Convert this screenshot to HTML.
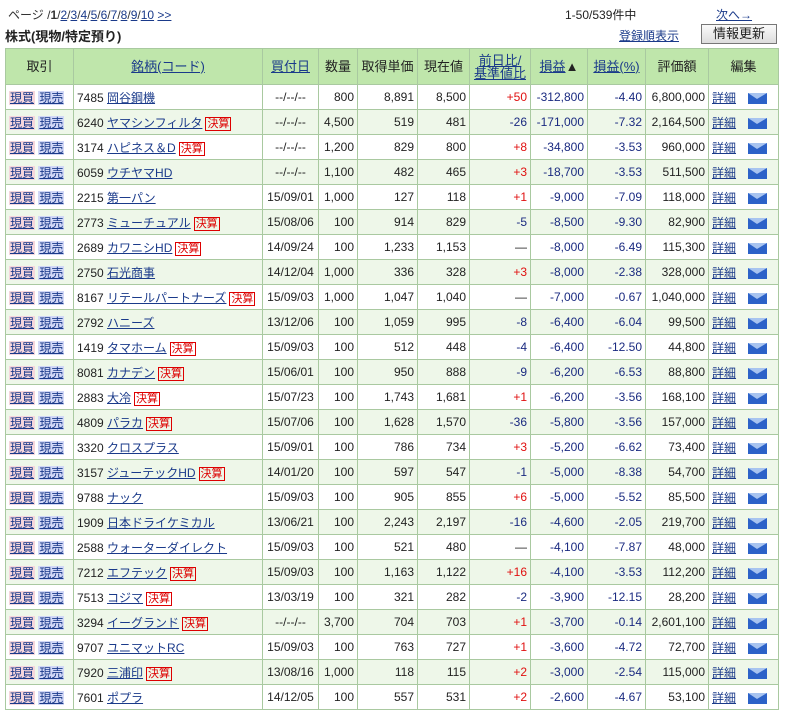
<!DOCTYPE html>
<html><head><meta charset="utf-8"><style>
body{margin:0;background:#fff;font-family:"Liberation Sans","Noto Sans CJK JP",sans-serif;font-size:12px;color:#222;width:786px;height:711px;overflow:hidden;position:relative}
a{color:#1a3a8a;text-decoration:underline}
.top{position:absolute;top:6px;left:8px;font-size:12px;color:#333}
.cnt{position:absolute;top:6px;left:565px}
.nx{position:absolute;top:6px;left:716px}
.ttl{position:absolute;top:26px;left:5px;font-weight:bold;font-size:13px}
.reg{position:absolute;top:27px;left:619px}
.btn{position:absolute;top:24px;left:701px;width:74px;height:18px;border:1px solid #777;background:linear-gradient(#fafafa,#ddd);text-align:center;line-height:18px;font-size:13px}
table{position:absolute;top:48px;left:5px;border-collapse:collapse;table-layout:fixed;width:773px}
td,th{border:1px solid #a9c9a0;height:24px;padding:0 3px;white-space:nowrap;overflow:hidden}
th{background:#bfe6ab;font-weight:normal;height:35px;font-size:13px;text-align:center;line-height:13px}
tr:nth-child(odd) td{background:#eef7e9}
td{text-align:right}
td.l{text-align:left}
td.c{text-align:center}
.b{background:#f6d6dc;padding:0 1px}.s{background:#d2d8f6;padding:0 1px}
.k{color:#d00;border:1px solid #d00;font-size:11px;padding:0 1px;margin-left:3px;text-decoration:none}
.p{color:#e01010}.n{color:#1a2a80}
.m{display:inline-block;width:19px;height:11px;vertical-align:middle;margin-left:12px;background:#2c62c8;position:relative}
.m:after{content:"";position:absolute;left:0;top:0;border-left:9px solid transparent;border-right:10px solid transparent;border-top:6px solid #a8c4f0}
</style></head><body>
<div class="top">ページ /<b>1</b>/<a>2</a>/<a>3</a>/<a>4</a>/<a>5</a>/<a>6</a>/<a>7</a>/<a>8</a>/<a>9</a>/<a>10</a> <a>&gt;&gt;</a></div>
<div class="cnt">1-50/539件中</div><div class="nx"><a>次へ→</a></div>
<div class="ttl">株式(現物/特定預り)</div>
<div class="reg"><a>登録順表示</a></div>
<div class="btn">情報更新</div>
<table>
<colgroup><col style="width:68px"><col style="width:189px"><col style="width:56px"><col style="width:39px"><col style="width:60px"><col style="width:52px"><col style="width:61px"><col style="width:57px"><col style="width:58px"><col style="width:63px"><col style="width:70px"></colgroup>
<tr><th>取引</th><th><a>銘柄(コード)</a></th><th><a>買付日</a></th><th>数量</th><th>取得単価</th><th>現在値</th><th><a>前日比/<br>基準値比</a></th><th><a>損益</a>▲</th><th><a>損益(%)</a></th><th>評価額</th><th>編集</th></tr>
<tr><td class="l"><a class="b">現買</a> <a class="s">現売</a></td><td class="l">7485 <a>岡谷鋼機</a></td><td class="c">--/--/--</td><td>800</td><td>8,891</td><td>8,500</td><td class="p">+50</td><td class="n">-312,800</td><td class="n">-4.40</td><td>6,800,000</td><td class="l"><a>詳細</a><span class="m"></span></td></tr>
<tr><td class="l"><a class="b">現買</a> <a class="s">現売</a></td><td class="l">6240 <a>ヤマシンフィルタ</a><span class="k">決算</span></td><td class="c">--/--/--</td><td>4,500</td><td>519</td><td>481</td><td class="n">-26</td><td class="n">-171,000</td><td class="n">-7.32</td><td>2,164,500</td><td class="l"><a>詳細</a><span class="m"></span></td></tr>
<tr><td class="l"><a class="b">現買</a> <a class="s">現売</a></td><td class="l">3174 <a>ハピネス＆D</a><span class="k">決算</span></td><td class="c">--/--/--</td><td>1,200</td><td>829</td><td>800</td><td class="p">+8</td><td class="n">-34,800</td><td class="n">-3.53</td><td>960,000</td><td class="l"><a>詳細</a><span class="m"></span></td></tr>
<tr><td class="l"><a class="b">現買</a> <a class="s">現売</a></td><td class="l">6059 <a>ウチヤマHD</a></td><td class="c">--/--/--</td><td>1,100</td><td>482</td><td>465</td><td class="p">+3</td><td class="n">-18,700</td><td class="n">-3.53</td><td>511,500</td><td class="l"><a>詳細</a><span class="m"></span></td></tr>
<tr><td class="l"><a class="b">現買</a> <a class="s">現売</a></td><td class="l">2215 <a>第一パン</a></td><td class="c">15/09/01</td><td>1,000</td><td>127</td><td>118</td><td class="p">+1</td><td class="n">-9,000</td><td class="n">-7.09</td><td>118,000</td><td class="l"><a>詳細</a><span class="m"></span></td></tr>
<tr><td class="l"><a class="b">現買</a> <a class="s">現売</a></td><td class="l">2773 <a>ミューチュアル</a><span class="k">決算</span></td><td class="c">15/08/06</td><td>100</td><td>914</td><td>829</td><td class="n">-5</td><td class="n">-8,500</td><td class="n">-9.30</td><td>82,900</td><td class="l"><a>詳細</a><span class="m"></span></td></tr>
<tr><td class="l"><a class="b">現買</a> <a class="s">現売</a></td><td class="l">2689 <a>カワニシHD</a><span class="k">決算</span></td><td class="c">14/09/24</td><td>100</td><td>1,233</td><td>1,153</td><td>—</td><td class="n">-8,000</td><td class="n">-6.49</td><td>115,300</td><td class="l"><a>詳細</a><span class="m"></span></td></tr>
<tr><td class="l"><a class="b">現買</a> <a class="s">現売</a></td><td class="l">2750 <a>石光商事</a></td><td class="c">14/12/04</td><td>1,000</td><td>336</td><td>328</td><td class="p">+3</td><td class="n">-8,000</td><td class="n">-2.38</td><td>328,000</td><td class="l"><a>詳細</a><span class="m"></span></td></tr>
<tr><td class="l"><a class="b">現買</a> <a class="s">現売</a></td><td class="l">8167 <a>リテールパートナーズ</a><span class="k">決算</span></td><td class="c">15/09/03</td><td>1,000</td><td>1,047</td><td>1,040</td><td>—</td><td class="n">-7,000</td><td class="n">-0.67</td><td>1,040,000</td><td class="l"><a>詳細</a><span class="m"></span></td></tr>
<tr><td class="l"><a class="b">現買</a> <a class="s">現売</a></td><td class="l">2792 <a>ハニーズ</a></td><td class="c">13/12/06</td><td>100</td><td>1,059</td><td>995</td><td class="n">-8</td><td class="n">-6,400</td><td class="n">-6.04</td><td>99,500</td><td class="l"><a>詳細</a><span class="m"></span></td></tr>
<tr><td class="l"><a class="b">現買</a> <a class="s">現売</a></td><td class="l">1419 <a>タマホーム</a><span class="k">決算</span></td><td class="c">15/09/03</td><td>100</td><td>512</td><td>448</td><td class="n">-4</td><td class="n">-6,400</td><td class="n">-12.50</td><td>44,800</td><td class="l"><a>詳細</a><span class="m"></span></td></tr>
<tr><td class="l"><a class="b">現買</a> <a class="s">現売</a></td><td class="l">8081 <a>カナデン</a><span class="k">決算</span></td><td class="c">15/06/01</td><td>100</td><td>950</td><td>888</td><td class="n">-9</td><td class="n">-6,200</td><td class="n">-6.53</td><td>88,800</td><td class="l"><a>詳細</a><span class="m"></span></td></tr>
<tr><td class="l"><a class="b">現買</a> <a class="s">現売</a></td><td class="l">2883 <a>大冷</a><span class="k">決算</span></td><td class="c">15/07/23</td><td>100</td><td>1,743</td><td>1,681</td><td class="p">+1</td><td class="n">-6,200</td><td class="n">-3.56</td><td>168,100</td><td class="l"><a>詳細</a><span class="m"></span></td></tr>
<tr><td class="l"><a class="b">現買</a> <a class="s">現売</a></td><td class="l">4809 <a>パラカ</a><span class="k">決算</span></td><td class="c">15/07/06</td><td>100</td><td>1,628</td><td>1,570</td><td class="n">-36</td><td class="n">-5,800</td><td class="n">-3.56</td><td>157,000</td><td class="l"><a>詳細</a><span class="m"></span></td></tr>
<tr><td class="l"><a class="b">現買</a> <a class="s">現売</a></td><td class="l">3320 <a>クロスプラス</a></td><td class="c">15/09/01</td><td>100</td><td>786</td><td>734</td><td class="p">+3</td><td class="n">-5,200</td><td class="n">-6.62</td><td>73,400</td><td class="l"><a>詳細</a><span class="m"></span></td></tr>
<tr><td class="l"><a class="b">現買</a> <a class="s">現売</a></td><td class="l">3157 <a>ジューテックHD</a><span class="k">決算</span></td><td class="c">14/01/20</td><td>100</td><td>597</td><td>547</td><td class="n">-1</td><td class="n">-5,000</td><td class="n">-8.38</td><td>54,700</td><td class="l"><a>詳細</a><span class="m"></span></td></tr>
<tr><td class="l"><a class="b">現買</a> <a class="s">現売</a></td><td class="l">9788 <a>ナック</a></td><td class="c">15/09/03</td><td>100</td><td>905</td><td>855</td><td class="p">+6</td><td class="n">-5,000</td><td class="n">-5.52</td><td>85,500</td><td class="l"><a>詳細</a><span class="m"></span></td></tr>
<tr><td class="l"><a class="b">現買</a> <a class="s">現売</a></td><td class="l">1909 <a>日本ドライケミカル</a></td><td class="c">13/06/21</td><td>100</td><td>2,243</td><td>2,197</td><td class="n">-16</td><td class="n">-4,600</td><td class="n">-2.05</td><td>219,700</td><td class="l"><a>詳細</a><span class="m"></span></td></tr>
<tr><td class="l"><a class="b">現買</a> <a class="s">現売</a></td><td class="l">2588 <a>ウォーターダイレクト</a></td><td class="c">15/09/03</td><td>100</td><td>521</td><td>480</td><td>—</td><td class="n">-4,100</td><td class="n">-7.87</td><td>48,000</td><td class="l"><a>詳細</a><span class="m"></span></td></tr>
<tr><td class="l"><a class="b">現買</a> <a class="s">現売</a></td><td class="l">7212 <a>エフテック</a><span class="k">決算</span></td><td class="c">15/09/03</td><td>100</td><td>1,163</td><td>1,122</td><td class="p">+16</td><td class="n">-4,100</td><td class="n">-3.53</td><td>112,200</td><td class="l"><a>詳細</a><span class="m"></span></td></tr>
<tr><td class="l"><a class="b">現買</a> <a class="s">現売</a></td><td class="l">7513 <a>コジマ</a><span class="k">決算</span></td><td class="c">13/03/19</td><td>100</td><td>321</td><td>282</td><td class="n">-2</td><td class="n">-3,900</td><td class="n">-12.15</td><td>28,200</td><td class="l"><a>詳細</a><span class="m"></span></td></tr>
<tr><td class="l"><a class="b">現買</a> <a class="s">現売</a></td><td class="l">3294 <a>イーグランド</a><span class="k">決算</span></td><td class="c">--/--/--</td><td>3,700</td><td>704</td><td>703</td><td class="p">+1</td><td class="n">-3,700</td><td class="n">-0.14</td><td>2,601,100</td><td class="l"><a>詳細</a><span class="m"></span></td></tr>
<tr><td class="l"><a class="b">現買</a> <a class="s">現売</a></td><td class="l">9707 <a>ユニマットRC</a></td><td class="c">15/09/03</td><td>100</td><td>763</td><td>727</td><td class="p">+1</td><td class="n">-3,600</td><td class="n">-4.72</td><td>72,700</td><td class="l"><a>詳細</a><span class="m"></span></td></tr>
<tr><td class="l"><a class="b">現買</a> <a class="s">現売</a></td><td class="l">7920 <a>三浦印</a><span class="k">決算</span></td><td class="c">13/08/16</td><td>1,000</td><td>118</td><td>115</td><td class="p">+2</td><td class="n">-3,000</td><td class="n">-2.54</td><td>115,000</td><td class="l"><a>詳細</a><span class="m"></span></td></tr>
<tr><td class="l"><a class="b">現買</a> <a class="s">現売</a></td><td class="l">7601 <a>ポプラ</a></td><td class="c">14/12/05</td><td>100</td><td>557</td><td>531</td><td class="p">+2</td><td class="n">-2,600</td><td class="n">-4.67</td><td>53,100</td><td class="l"><a>詳細</a><span class="m"></span></td></tr>
</table>
</body></html>
